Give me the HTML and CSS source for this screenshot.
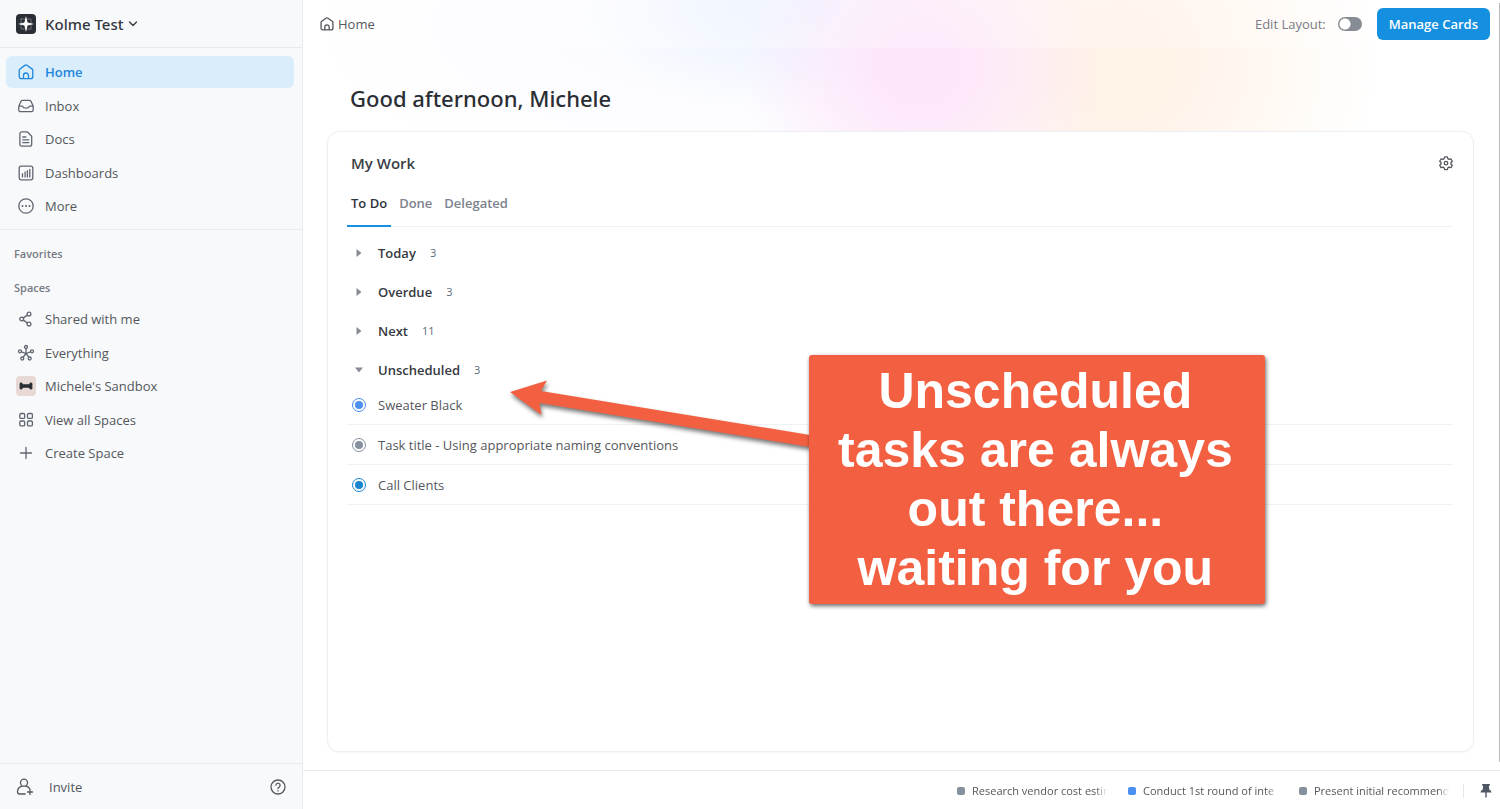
FILE: index.html
```html
<!DOCTYPE html>
<html lang="en">
<head>
<meta charset="utf-8">
<title>Home</title>
<link rel="stylesheet" href="styles.css">
</head>
<body>
<div class="app">
  <aside class="sidebar">
    <header class="workspace">
      <button class="workspace-button" type="button">
        <svg class="logo" width="20" height="20" viewBox="0 0 20 20"><rect width="20" height="20" rx="4" fill="#292d34"/><path d="M5 5h10v10H5z" fill="none" stroke="#70757e" stroke-width="1" stroke-dasharray="2 1"/><path d="M10 2l1.600 6.400L18 10l-6.400 1.600L10 18l-1.600-6.400L2 10l6.400-1.600z" fill="#fff"/></svg>
        <span>Kolme Test</span>
        <svg class="chevron" width="10" height="10" viewBox="0 0 10 10"><path d="M1.500 3l3.500 3.500L8.500 3"/></svg>
      </button>
    </header>
    <nav class="nav-list main-nav">
      <a class="nav-item active" href="#"><svg viewBox="0 0 16 16"><path d="M1.200 6.500a2 2 0 0 1 .8-1.600L6.800 1.400a2 2 0 0 1 2.400 0L14 4.900a2 2 0 0 1 .8 1.600v6a2.200 2.200 0 0 1-2.200 2.200H3.400a2.200 2.200 0 0 1-2.200-2.200zM5.500 14.500v-3a2.500 2.500 0 0 1 5 0v3"/></svg>Home</a>
      <a class="nav-item" href="#"><svg viewBox="0 0 16 16"><path d="M.8 8.200L3 3.300a1.800 1.800 0 0 1 1.600-1h6.800a1.800 1.800 0 0 1 1.600 1l2.200 4.900v3.700a1.800 1.800 0 0 1-1.800 1.800H2.600a1.800 1.800 0 0 1-1.800-1.800zh3.700C5 9.500 6 10.200 8 10.200s3-.7 3.500-2h3.700"/></svg>Inbox</a>
      <a class="nav-item" href="#"><svg viewBox="0 0 16 16"><path d="M3.800.8h5.400l4.500 4.500v8a1.900 1.900 0 0 1-1.900 1.900H3.800a1.900 1.900 0 0 1-1.900-1.900V2.700A1.900 1.900 0 0 1 3.800.8zM4.800 6h3M4.800 8.800h6M4.800 11.700h6"/></svg>Docs</a>
      <a class="nav-item" href="#"><svg viewBox="0 0 16 16"><rect x="1.200" y="1.200" width="13.600" height="13.600" rx="2"/><path d="M4.500 8.700V12M7.100 7V12M9.400 5.700V12M11.800 4.300V12"/></svg>Dashboards</a>
      <a class="nav-item" href="#"><svg viewBox="0 0 16 16"><circle cx="8" cy="8" r="7.200"/><path class="dots" d="M4.500 8h.01M8 8h.01M11.500 8h.01"/></svg>More</a>
    </nav>
    <section class="spaces">
      <h2 class="side-heading">Favorites</h2>
      <h2 class="side-heading">Spaces</h2>
      <nav class="nav-list">
        <a class="nav-item" href="#"><svg viewBox="0 0 16 16"><circle cx="3.700" cy="8" r="1.900"/><circle cx="11" cy="3" r="1.900"/><circle cx="11" cy="13" r="1.900"/><path d="M5.300 6.900l4.100-2.800M5.300 9.100l4.100 2.800"/></svg>Shared with me</a>
        <a class="nav-item" href="#"><svg viewBox="0 0 16 16"><circle cx="8" cy="2" r="1.500"/><circle cx="2" cy="6.300" r="1.500"/><circle cx="14" cy="6.300" r="1.500"/><circle cx="4.300" cy="13.500" r="1.500"/><circle cx="11.700" cy="13.500" r="1.500"/><path d="M8 3.500v5M3.500 6.800L8 8.500l4.500-1.700M5.200 12.200L8 8.500l2.800 3.700"/></svg>Everything</a>
        <a class="nav-item" href="#"><svg class="space-avatar" viewBox="0 0 20 20"><rect width="20" height="20" rx="4" fill="#e8d9d5"/><path d="M3.500 8a1.600 1.600 0 0 1 3-.6c.2.600.6.900 1.200.9h4.600c.6 0 1-.3 1.200-.9a1.600 1.600 0 0 1 3 .6c0 .8-.2 1.300-.2 2s.2 1.200.2 2a1.600 1.600 0 0 1-3 .6c-.2-.6-.6-.9-1.200-.9H7.700c-.6 0-1 .3-1.200.9a1.600 1.600 0 0 1-3-.6c0-.8.2-1.300.2-2s-.2-1.200-.2-2z" fill="#292d34"/></svg>Michele's Sandbox</a>
        <a class="nav-item" href="#"><svg viewBox="0 0 16 16"><rect x="1.800" y="1.500" width="4.900" height="4.900" rx="1.200"/><rect x="9.500" y="1.500" width="4.900" height="4.900" rx="1.200"/><rect x="1.800" y="9" width="4.900" height="4.900" rx="1.200"/><rect x="9.500" y="9" width="4.900" height="4.900" rx="1.200"/></svg>View all Spaces</a>
        <a class="nav-item" href="#"><svg viewBox="0 0 16 16"><path d="M8 2.500v11M2.500 8h11"/></svg>Create Space</a>
      </nav>
    </section>
    <footer class="side-footer">
      <button class="invite" type="button"><svg width="18" height="18" viewBox="0 0 18 18"><circle cx="8" cy="4.700" r="3.500"/><path d="M5.800 8.200c-2.600.9-4.300 2.800-4.300 5.600 0 1.500 1 2.200 2.200 2.200h5.500M10.200 8.200c1.500.5 2.700 1.300 3.400 2.400M14 11.500v5M11.500 14h5"/></svg>Invite</button>
      <button class="help" type="button" aria-label="Help"><svg width="16" height="16" viewBox="0 0 16 16"><circle cx="8" cy="8" r="7"/><path d="M5.900 6.200a2.100 2.100 0 1 1 3.200 1.900c-.7.400-1.100.7-1.100 1.500M8 11.700v.2"/></svg></button>
    </footer>
  </aside>

  <div class="main">
    <main class="content">
      <header class="topbar">
        <a class="crumb" href="#"><svg width="14" height="14" viewBox="0 0 16 16"><path d="M1.200 6.500a2 2 0 0 1 .8-1.600L6.800 1.400a2 2 0 0 1 2.400 0L14 4.900a2 2 0 0 1 .8 1.600v6a2.200 2.200 0 0 1-2.200 2.200H3.400a2.200 2.200 0 0 1-2.200-2.200zM5.500 14.500v-3a2.500 2.500 0 0 1 5 0v3"/></svg>Home</a>
        <label class="edit-layout">Edit Layout: <input class="toggle" type="checkbox" role="switch"></label>
        <button class="primary" type="button">Manage Cards</button>
      </header>
      <h1 class="greeting">Good afternoon, Michele</h1>
      <section class="card">
        <header class="card-head">
          <h2>My Work</h2>
          <button class="gear" type="button" aria-label="Settings"><svg width="14" height="14" viewBox="0 0 16 16"><path d="M6.500 1h3l.6 2 1.500.9 2.100-.5 1.500 2.600-1.500 1.500v1.600l1.500 1.500-1.500 2.600-2.100-.5-1.500.9-.6 2h-3l-.6-2-1.500-.9-2.100.5L.8 10.600l1.500-1.500V7.500L.8 6l1.500-2.600 2.100.5L5.900 3z"/><circle cx="8" cy="8.200" r="2"/></svg></button>
        </header>
        <div class="tabs" role="tablist">
          <button class="tab selected" type="button" role="tab" aria-selected="true">To Do</button>
          <button class="tab" type="button" role="tab" aria-selected="false">Done</button>
          <button class="tab" type="button" role="tab" aria-selected="false">Delegated</button>
        </div>
        <div class="groups">
          <button class="group" type="button"><svg width="8" height="8" viewBox="0 0 8 8"><path d="M1.500 0L6.500 4l-5 4z"/></svg><span>Today</span><small>3</small></button>
          <button class="group" type="button"><svg width="8" height="8" viewBox="0 0 8 8"><path d="M1.500 0L6.500 4l-5 4z"/></svg><span>Overdue</span><small>3</small></button>
          <button class="group" type="button"><svg width="8" height="8" viewBox="0 0 8 8"><path d="M1.500 0L6.500 4l-5 4z"/></svg><span>Next</span><small>11</small></button>
          <button class="group" type="button" aria-expanded="true"><svg width="8" height="8" viewBox="0 0 8 8"><path d="M0 1.500L4 6.500l4-5z"/></svg><span>Unscheduled</span><small>3</small></button>
        </div>
        <ul class="tasks">
          <li class="task"><span class="status blue"></span>Sweater Black</li>
          <li class="task"><span class="status gray"></span>Task title - Using appropriate naming conventions</li>
          <li class="task"><span class="status azure"></span>Call Clients</li>
        </ul>
      </section>
      <span class="scroll-thumb"></span>
    </main>
    <footer class="tray">
      <a class="tray-item" href="#"><i class="gray"></i><span>Research vendor cost estin</span></a>
      <a class="tray-item" href="#"><i class="blue"></i><span>Conduct 1st round of inte</span></a>
      <a class="tray-item" href="#"><i class="gray"></i><span>Present initial recommend</span></a>
      <button class="pin" type="button" aria-label="Pin"><svg width="12" height="14" viewBox="0 0 12 14"><path d="M2.200 0h7.600v1.700H8.900l.3 3.700c1.400.6 2.200 1.700 2.300 3.200H6.700V13L6 14l-.7-1V8.600H.5c.1-1.500.9-2.600 2.300-3.200l.3-3.700h-.9z"/></svg></button>
    </footer>
    <div class="callout">
      <svg class="arrow" width="300" height="70" viewBox="0 0 300 70"><path d="M0 23L37 11.500L31 22L300 66V78L29.500 34L31.500 46z"/></svg>
      <p class="callout-box">Unscheduled<br>tasks are always<br>out there...<br>waiting for you</p>
    </div>
  </div>
</div>
</body>
</html>
```
FILE: styles.css
```css
* { box-sizing: border-box; }
body {
  margin: 0;
  font: 13px/20px "Open Sans", "Noto Sans", sans-serif;
  color: #54575d;
  background: #fff;
}
h1, h2, p, ul { margin: 0; padding: 0; }
button { border: 0; background: none; padding: 0; margin: 0; font: inherit; color: inherit; }
a { color: inherit; text-decoration: none; }
svg { display: block; flex: none; overflow: visible; fill: none; stroke: currentColor; stroke-width: 1.3; stroke-linecap: round; stroke-linejoin: round; }

.app { display: flex; height: 100vh; }

.sidebar {
  flex: 0 0 303px;
  display: flex;
  flex-direction: column;
  background: #f8f9fa;
  border-right: 1px solid #e8eaed;
}
.workspace { height: 48px; flex: none; padding: 0 16px; border-bottom: 1px solid #e8eaed; display: flex; align-items: center; }
.workspace-button { display: flex; align-items: center; gap: 9px; font-size: 15px; font-weight: 500; color: #33373e; font-family: "Noto Sans", sans-serif; }
.logo, .space-avatar rect, .space-avatar path { stroke: none; }
.chevron { margin-left: -4px; }

.nav-list { display: flex; flex-direction: column; justify-content: space-between; min-height: 166px; }
.main-nav { margin: 8px 0 7px; }
.nav-item { display: flex; align-items: center; gap: 11px; height: 32px; margin: 0 8px 0 6px; padding: 0 12px; border-radius: 6px; }
.nav-item svg { width: 16px; height: 16px; color: #5f6672; }
.nav-item.active { background: #daedfb; color: #1e86dd; font-weight: 600; }
.nav-item.active svg { color: #1e86dd; }
.nav-item .space-avatar { width: 20px; height: 20px; margin: 0 -2px; }
.dots { stroke-width: 2; }

.spaces { flex: 1; border-top: 1px solid #e8eaed; padding-top: 7px; }
.side-heading { padding: 7px 14px; font-size: 11px; line-height: 20px; font-weight: 600; color: #767b84; }
.spaces .nav-list { margin-top: -2px; }

.side-footer { height: 46px; flex: none; display: flex; align-items: center; justify-content: space-between; padding: 0 16px; border-top: 1px solid #e8eaed; }
.invite { display: flex; align-items: center; gap: 15px; }

.main { position: relative; flex: 1; min-width: 0; display: flex; flex-direction: column; }
.content {
  position: relative;
  flex: 1;
  min-height: 0;
  display: flex;
  flex-direction: column;
  padding-bottom: 18px;
  background:
    radial-gradient(circle 180px at 618px 66px, #fde6fa 20%, #fde6fa00),
    radial-gradient(circle 260px at 815px 60px, #fff2e7 20%, #fff2e700),
    radial-gradient(ellipse 190px 110px at 470px 0, #edf3ff 20%, #edf3ff00),
    radial-gradient(ellipse 440px 180px at 440px 20px, #f9faff, #f9faff00);
}
.topbar { display: flex; align-items: center; height: 48px; flex: none; padding: 0 10px 0 17px; background: #ffffff40; }
.crumb { display: flex; align-items: center; gap: 4px; margin-right: auto; }
.crumb svg, .gear svg { stroke-width: 1.5; }
.edit-layout { display: flex; align-items: center; gap: 12px; margin-right: 15px; color: #777c85; }
.toggle { appearance: none; width: 24px; height: 14px; margin: 0; border-radius: 7px; background: radial-gradient(circle at 7px 7px, #fff 5px, #878b94 6px); }
.primary { height: 32px; padding: 0 12px; border-radius: 6px; background: #1590e0; color: #fff; font-weight: 600; }
.greeting { padding: 34px 47px 16px; font-family: "Noto Sans", sans-serif; font-size: 22px; line-height: 33px; font-weight: 500; color: #2a2e34; }

.card { flex: 1; margin: 0 26px 0 24px; padding: 19px 20px 0 19px; border: 1px solid #edeff2; border-radius: 12px; background: #fff; box-shadow: 0 1px 3px #0000000a; }
.card-head { display: flex; align-items: center; justify-content: space-between; padding-left: 4px; height: 24px; color: #54575d; }
.card-head h2 { font-size: 15px; font-weight: 600; color: #3a3e45; }
.tabs { display: flex; gap: 4px; height: 52px; border-bottom: 1px solid #eff0f3; }
.tab { height: 52px; padding: 6px 4px 0; font-size: 13px; font-weight: 600; color: #7c828d; border-bottom: 2px solid transparent; }
.tab.selected { color: #2f333a; border-color: #1590e0; }
.groups { padding-top: 6px; }
.group { display: flex; align-items: center; width: 100%; height: 39px; padding-left: 8px; color: #35393f; font-weight: 600; }
.group svg { fill: #878b94; stroke: none; }
.group span { margin: 0 14px 0 15px; }
.group small { font-size: 11px; font-weight: 400; color: #5e6b79; }
.tasks { list-style: none; margin-top: -4px; }
.task { display: flex; align-items: center; gap: 12px; height: 40px; padding-left: 5px; border-bottom: 1px solid #f0f1f3; }
.status { flex: none; width: 14px; height: 14px; border: 1px solid; border-radius: 50%; padding: 2px; }
.status::before { content: ""; display: block; height: 8px; border-radius: 50%; background: currentColor; }
.blue { color: #4b8ff0; }
.gray { color: #87909e; }
.azure { color: #1b85d0; }
.scroll-thumb { position: absolute; top: 3px; right: 0; bottom: 8px; width: 1px; background: #bcbcbc; }

.tray { display: flex; align-items: center; justify-content: flex-end; height: 39px; flex: none; border-top: 1px solid #e8eaed; padding: 2px 8px 0 0; font-size: 11px; }
.tray-item { display: flex; align-items: center; gap: 7px; width: 150px; margin-right: 21px; }
.tray-item i { width: 8px; height: 8px; flex: none; border-radius: 2px; background: currentColor; }
.tray-item span { flex: 1; overflow: hidden; white-space: nowrap; color: #54575d; mask-image: linear-gradient(90deg, #000 92%, transparent); }
.pin { border-left: 1px solid #e4e6ea; padding-left: 16px; margin-left: -7px; color: #4f5762; }
.pin svg { fill: currentColor; stroke: none; }

.callout { position: absolute; left: 207px; top: 355px; padding-left: 299px; }
.arrow { position: absolute; left: 0; top: 14px; fill: #f26041; stroke: none; filter: drop-shadow(1px 3px 2px #0008); }
.callout-box { position: relative; padding: 7px 32px 6px 29px; border-radius: 3px; background: #f26041; box-shadow: 1px 2px 4px #0009; color: #fff; text-align: center; font: bold 50px/59px "Liberation Sans", Arial, sans-serif; white-space: nowrap; }
```
